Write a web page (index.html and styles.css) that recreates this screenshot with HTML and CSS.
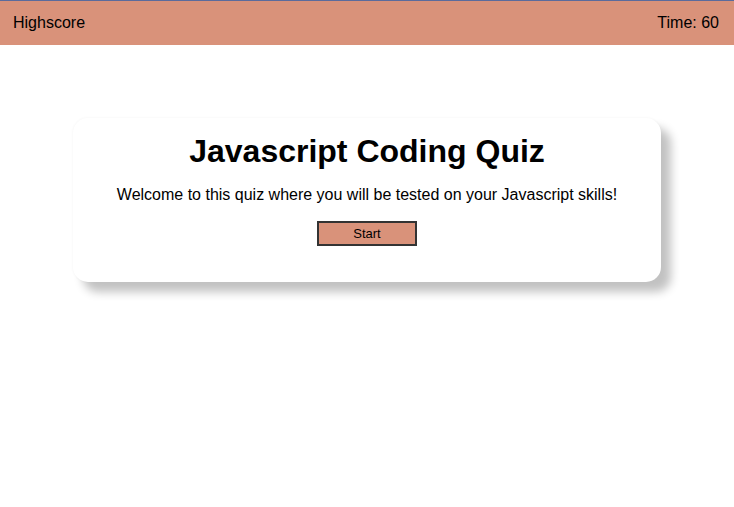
FILE: index.html
```html
<!DOCTYPE html>
<html>
<head>
<meta charset="utf-8">
<link rel="stylesheet" href="styles.css">
</head>
<body>
<header class="topbar">
  <span class="highscore">Highscore</span>
  <span class="timer">Time: 60</span>
</header>
<main class="card">
  <h1 class="title">Javascript Coding Quiz</h1>
  <p class="intro">Welcome to this quiz where you will be tested on your Javascript skills!</p>
  <button class="start">Start</button>
</main>
</body>
</html>
```
FILE: styles.css
```css
html, body {
  margin: 0;
  padding: 0;
  background: #fff;
  font-family: "Liberation Sans", Arial, sans-serif;
  color: #000;
}
body {
  min-height: 507px;
}
.topbar {
  display: flex;
  justify-content: space-between;
  align-items: center;
  height: 44px;
  border-top: 1px solid #5b6b9c;
  background: #d9927a;
  padding: 0 15px 0 13px;
  font-size: 16px;
}
.card {
  width: 588px;
  margin: 73px auto 0;
  background: #fff;
  border-radius: 15px;
  box-shadow: 10px 10px 10px #c2c2c2, 0 0 3px rgba(0,0,0,0.05);
  padding: 15px 0 36px;
  display: flex;
  flex-direction: column;
  align-items: center;
}
.title {
  margin: 0;
  font-size: 32px;
  line-height: 37px;
  font-weight: bold;
}
.intro {
  margin: 16px 0 0;
  font-size: 16px;
  line-height: 18px;
}
.start {
  margin-top: 17px;
  width: 100px;
  height: 25px;
  background: #d9927a;
  border: 2px solid #333;
  font-family: "Liberation Sans", Arial, sans-serif;
  font-size: 13px;
  color: #000;
  padding: 0;
}
```
